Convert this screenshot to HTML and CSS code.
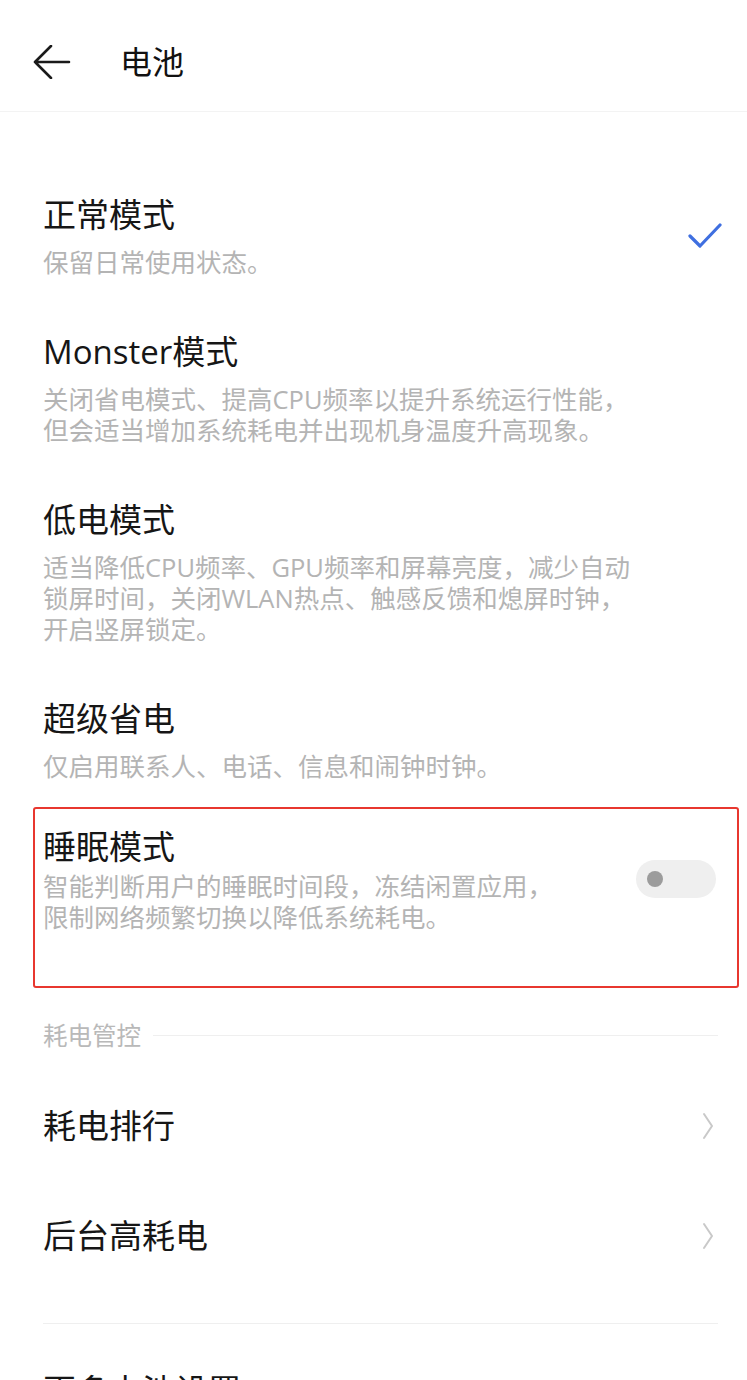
FILE: index.html
```html
<!DOCTYPE html>
<html lang="zh-CN">
<head>
  <meta charset="UTF-8" />
  <meta name="viewport" content="width=device-width, initial-scale=1.0" />
  <title>电池</title>
  <link rel="stylesheet" href="styles.css">
</head>
<body>
  <div class="header">
    <svg class="back" viewBox="0 0 38 34"><path d="M36 17H2M18 1L2 17L18 33"/></svg>
    <div class="header-title">电池</div>
  </div>

  <div class="list">
    <div class="item">
      <div class="item-text">
        <div class="item-title">正常模式</div>
        <div class="item-desc">保留日常使用状态。</div>
      </div>
      <svg class="check" viewBox="0 0 34 26"><path d="M2 13L12 23L32 2"/></svg>
    </div>

    <div class="item">
      <div class="item-text">
        <div class="item-title">Monster模式</div>
        <div class="item-desc">关闭省电模式、提高CPU频率以提升系统运行性能，<br>但会适当增加系统耗电并出现机身温度升高现象。</div>
      </div>
    </div>

    <div class="item">
      <div class="item-text">
        <div class="item-title">低电模式</div>
        <div class="item-desc">适当降低CPU频率、GPU频率和屏幕亮度，减少自动<br>锁屏时间，关闭WLAN热点、触感反馈和熄屏时钟，<br>开启竖屏锁定。</div>
      </div>
    </div>

    <div class="item">
      <div class="item-text">
        <div class="item-title">超级省电</div>
        <div class="item-desc">仅启用联系人、电话、信息和闹钟时钟。</div>
      </div>
    </div>

    <div class="item item-marked">
      <div class="item-text">
        <div class="item-title">睡眠模式</div>
        <div class="item-desc">智能判断用户的睡眠时间段，冻结闲置应用，<br>限制网络频繁切换以降低系统耗电。</div>
      </div>
      <div class="switch"><span class="knob"></span></div>
    </div>

    <div class="section-head">耗电管控</div>

    <div class="rows">
      <div class="row">
        <div class="item-title">耗电排行</div>
        <svg class="chevron" viewBox="0 0 12 28"><path d="M2 2L10 14L2 26"/></svg>
      </div>
      <div class="row">
        <div class="item-title">后台高耗电</div>
        <svg class="chevron" viewBox="0 0 12 28"><path d="M2 2L10 14L2 26"/></svg>
      </div>
    </div>

    <div class="divider"></div>

    <div class="row next-row">
      <div class="item-title">更多电池设置</div>
    </div>
  </div>
</body>
</html>
```

FILE: styles.css
```css
* { box-sizing: border-box; }
body {
  margin: 0;
  background: #ffffff;
  font-family: "Open Sans", "Noto Sans CJK SC", sans-serif;
  color: #161616;
}
.header {
  height: 112px;
  display: flex;
  align-items: center;
  padding: 12px 0 0 33px;
  border-bottom: 1px solid #f3f3f3;
}
.back {
  width: 38px;
  height: 34px;
  fill: none;
  stroke: #1a1a1a;
  stroke-width: 2.6;
  stroke-linecap: round;
  stroke-linejoin: round;
}
.header-title {
  margin-left: 49px;
  font-size: 32px;
  line-height: 44px;
  color: #111;
}

.list {
  padding: 54px 29px 0 43px;
}
.item {
  display: flex;
  align-items: center;
  padding: 27px 0 25px;
}
.item-text {
  flex: 1;
}
.item-title {
  font-size: 33px;
  line-height: 44px;
  color: #161616;
}
.item-desc {
  margin-top: 10px;
  font-size: 25.5px;
  line-height: 31px;
  color: #b4b4b4;
}
.check {
  width: 34px;
  height: 26px;
  margin-right: -4px;
  fill: none;
  stroke: #3f6fe0;
  stroke-width: 3.2;
  stroke-linecap: round;
  stroke-linejoin: round;
}

/* red annotation box around the sleep row */
.item-marked {
  margin: 0 -21px 0 -10px;
  padding: 16px 21px 53px 8px;
  border: 2px solid #e8372f;
  border-radius: 3px;
}
.item-marked .item-desc {
  margin-top: 2px;
}
.switch {
  width: 80px;
  height: 38px;
  border-radius: 19px;
  background: #efefef;
  display: flex;
  align-items: center;
  padding-left: 11px;
}
.knob {
  width: 16px;
  height: 16px;
  border-radius: 50%;
  background: #9c9c9c;
}

.section-head {
  display: flex;
  align-items: center;
  margin-top: 32px;
  font-size: 24.5px;
  line-height: 31px;
  color: #b9b9b9;
}
.section-head::after {
  content: "";
  flex: 1;
  height: 1px;
  margin-left: 12px;
  background: #efefef;
}

.rows {
  margin-top: 20px;
}
.row {
  height: 110px;
  display: flex;
  align-items: center;
  justify-content: space-between;
}
.chevron {
  width: 12px;
  height: 28px;
  margin-right: 4px;
  fill: none;
  stroke: #c9c9c9;
  stroke-width: 2;
  stroke-linecap: round;
  stroke-linejoin: round;
}
.divider {
  margin-top: 32px;
  height: 1px;
  background: #efefef;
}
.next-row {
  margin-top: 12px;
}
```
